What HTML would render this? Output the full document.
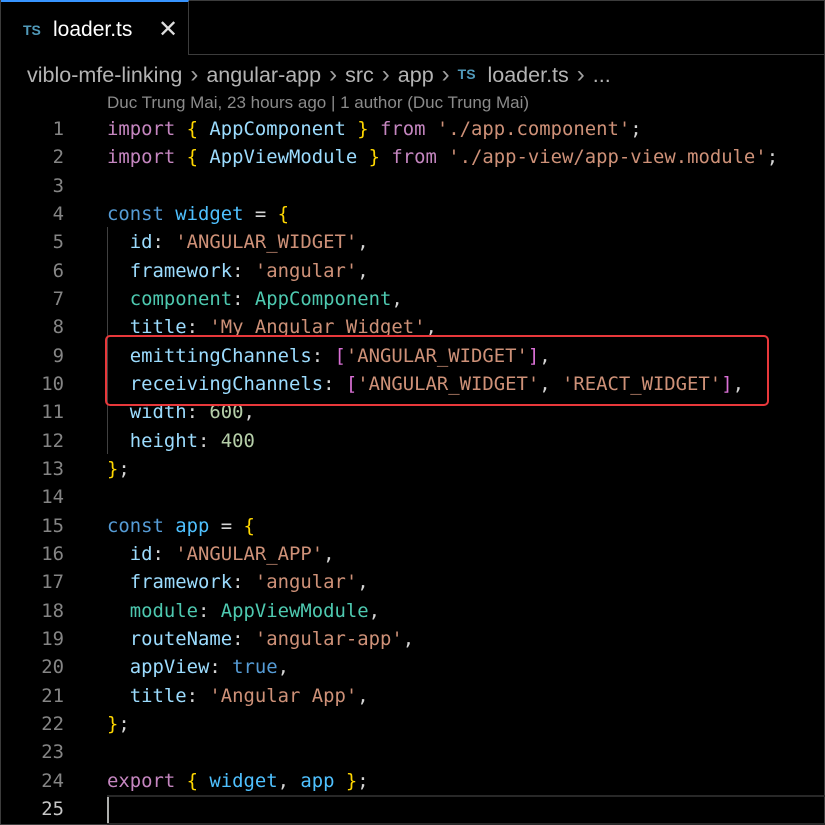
<!DOCTYPE html>
<html><head><meta charset="utf-8"><style>
html,body{margin:0;padding:0;background:#000;width:825px;height:825px;overflow:hidden;position:relative}
.frame{position:absolute;left:0;top:0;width:823px;height:823px;border:1px solid #3c3c3c}
.tab{position:absolute;left:1px;top:0;width:188px;height:55px;border-top:2px solid #3794ff;border-right:1px solid #3c3c3c;box-sizing:border-box;font-family:"Liberation Sans",sans-serif}
.tabline{position:absolute;left:189px;top:54px;right:0;height:1px;background:#3c3c3c}
.ts{color:#519aba;font-weight:bold;font-size:14px;position:absolute}
.tab .name{position:absolute;left:52px;top:16px;color:#fff;font-size:21px}
.tab .x{position:absolute;left:157px;top:13px;color:#ddd;font-size:24px}
.bc{position:absolute;left:27px;top:61px;color:#b4b4b4;font-family:"Liberation Sans",sans-serif;font-size:21.5px;white-space:pre}
.bc i{font-style:normal;color:#a0a0a0;display:inline-block;margin:0 8px;font-size:24px}
.blame{position:absolute;left:107px;top:93px;color:#8b8b8b;font-family:"Liberation Sans",sans-serif;font-size:17px;white-space:pre}
.code{position:absolute;left:0;top:115px;font-family:"DejaVu Sans Mono",monospace;font-size:18.9px}
.l{height:28.33px;line-height:28.33px;position:relative;white-space:pre}
.n{position:absolute;left:0;width:64px;text-align:right;color:#858585}
.c{position:absolute;left:107px;color:#d4d4d4}
.k{color:#c586c0}.b{color:#ffd700}.v{color:#9cdcfe}.s{color:#ce9178}.d{color:#569cd6}.t{color:#4ec9b0}.nu{color:#b5cea8}.w{color:#4fc1ff}.p{color:#da70d6}
.guide{position:absolute;left:107px;top:227px;width:1px;height:227px;background:#404040}
.red{position:absolute;left:105px;top:335px;width:660px;height:67px;border:2px solid #e8383b;border-radius:5px}
.cur{position:absolute;left:107px;top:795px;right:0;height:26px;border:2px solid #282828;border-right:none}
.caret{position:absolute;left:107px;top:797px;width:2px;height:26px;background:#aeafad}
</style></head><body>
<div class="frame"></div>
<div class="tab"><span class="ts" style="left:22px;top:20px">TS</span><span class="name">loader.ts</span><span class="x">✕</span></div>
<div class="tabline"></div>
<div class="bc">viblo-mfe-linking<i>›</i>angular-app<i>›</i>src<i>›</i>app<i>›</i><span class="ts" style="position:relative;top:-3px">TS</span>  loader.ts<i>›</i>...</div>
<div class="blame">Duc Trung Mai, 23 hours ago | 1 author (Duc Trung Mai)</div>
<div class="guide"></div>
<div class="code">
<div class="l"><span class="n">1</span><span class="c"><span class="k">import</span> <span class="b">{</span> <span class="v">AppComponent</span> <span class="b">}</span> <span class="k">from</span> <span class="s">'./app.component'</span>;</span></div>
<div class="l"><span class="n">2</span><span class="c"><span class="k">import</span> <span class="b">{</span> <span class="v">AppViewModule</span> <span class="b">}</span> <span class="k">from</span> <span class="s">'./app-view/app-view.module'</span>;</span></div>
<div class="l"><span class="n">3</span></div>
<div class="l"><span class="n">4</span><span class="c"><span class="d">const</span> <span class="w">widget</span> = <span class="b">{</span></span></div>
<div class="l"><span class="n">5</span><span class="c">  <span class="v">id</span>: <span class="s">'ANGULAR_WIDGET'</span>,</span></div>
<div class="l"><span class="n">6</span><span class="c">  <span class="v">framework</span>: <span class="s">'angular'</span>,</span></div>
<div class="l"><span class="n">7</span><span class="c">  <span class="t">component</span>: <span class="t">AppComponent</span>,</span></div>
<div class="l"><span class="n">8</span><span class="c">  <span class="v">title</span>: <span class="s">'My Angular Widget'</span>,</span></div>
<div class="l"><span class="n">9</span><span class="c">  <span class="v">emittingChannels</span>: <span class="p">[</span><span class="s">'ANGULAR_WIDGET'</span><span class="p">]</span>,</span></div>
<div class="l"><span class="n">10</span><span class="c">  <span class="v">receivingChannels</span>: <span class="p">[</span><span class="s">'ANGULAR_WIDGET'</span>, <span class="s">'REACT_WIDGET'</span><span class="p">]</span>,</span></div>
<div class="l"><span class="n">11</span><span class="c">  <span class="v">width</span>: <span class="nu">600</span>,</span></div>
<div class="l"><span class="n">12</span><span class="c">  <span class="v">height</span>: <span class="nu">400</span></span></div>
<div class="l"><span class="n">13</span><span class="c"><span class="b">}</span>;</span></div>
<div class="l"><span class="n">14</span></div>
<div class="l"><span class="n">15</span><span class="c"><span class="d">const</span> <span class="w">app</span> = <span class="b">{</span></span></div>
<div class="l"><span class="n">16</span><span class="c">  <span class="v">id</span>: <span class="s">'ANGULAR_APP'</span>,</span></div>
<div class="l"><span class="n">17</span><span class="c">  <span class="v">framework</span>: <span class="s">'angular'</span>,</span></div>
<div class="l"><span class="n">18</span><span class="c">  <span class="t">module</span>: <span class="t">AppViewModule</span>,</span></div>
<div class="l"><span class="n">19</span><span class="c">  <span class="v">routeName</span>: <span class="s">'angular-app'</span>,</span></div>
<div class="l"><span class="n">20</span><span class="c">  <span class="v">appView</span>: <span class="d">true</span>,</span></div>
<div class="l"><span class="n">21</span><span class="c">  <span class="v">title</span>: <span class="s">'Angular App'</span>,</span></div>
<div class="l"><span class="n">22</span><span class="c"><span class="b">}</span>;</span></div>
<div class="l"><span class="n">23</span></div>
<div class="l"><span class="n">24</span><span class="c"><span class="k">export</span> <span class="b">{</span> <span class="w">widget</span>, <span class="w">app</span> <span class="b">}</span>;</span></div>
<div class="l"><span class="n" style="color:#c6c6c6">25</span></div>
</div>
<div class="cur"></div><div class="caret"></div>
<div class="red"></div>
</body></html>
